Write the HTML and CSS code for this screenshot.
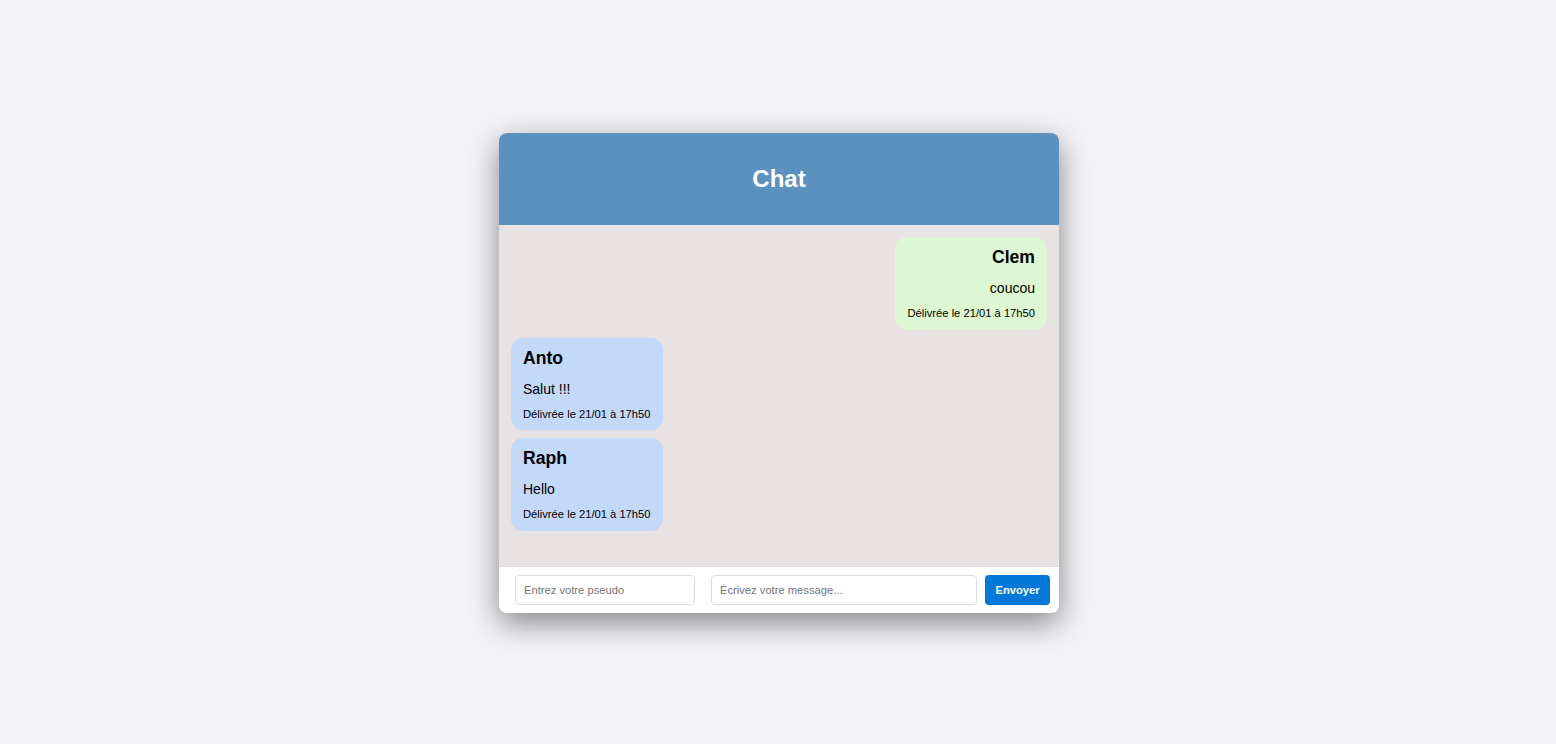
FILE: index.html
```html
<!DOCTYPE html>
<html lang="fr">
<head>
    <meta charset="UTF-8">
    <meta name="viewport" content="width=device-width, initial-scale=1.0">
    <title>Chat</title>
    <link rel="stylesheet" href="styles.css">
</head>
<body>
    <div class="chat-container">
        <div class="chat-header">
            <h1>Chat</h1>
        </div>

        <div class="messages" id="messages">
            <div class="message mine">
                <h3>Clem</h3>
                <p class="text">coucou</p>
                <p class="date">Délivrée le 21/01 à 17h50</p>
            </div>
            <div class="message other">
                <h3>Anto</h3>
                <p class="text">Salut !!!</p>
                <p class="date">Délivrée le 21/01 à 17h50</p>
            </div>
            <div class="message other">
                <h3>Raph</h3>
                <p class="text">Hello</p>
                <p class="date">Délivrée le 21/01 à 17h50</p>
            </div>
        </div>

        <form class="chat-form" onsubmit="return false">
            <input type="text" class="pseudo" placeholder="Entrez votre pseudo">
            <input type="text" class="message-input" placeholder="Écrivez votre message...">
            <button type="submit">Envoyer</button>
        </form>
    </div>
</body>
</html>
```

FILE: styles.css
```css
body {
    font-family: "Liberation Sans", Arial, sans-serif;
    background-color: #f3f3f7;
    margin: 0;
    padding: 2px 0 0 2px;
    box-sizing: border-box;
    height: 100vh;
    display: flex;
    align-items: center;
    justify-content: center;
}
.chat-container {
    width: 560px;
    height: 480px;
    background: white;
    border-radius: 8px;
    overflow: hidden;
    display: flex;
    flex-direction: column;
    box-shadow: 0 10px 30px rgba(0, 0, 0, 0.45);
}
.chat-header {
    background-color: #5a91bf;
    color: white;
    text-align: center;
    height: 92px;
    display: flex;
    align-items: center;
    justify-content: center;
}
.chat-header h1 {
    margin: 0;
    font-size: 24px;
    line-height: 28px;
}
.messages {
    flex: 1;
    background-color: #e8e2e2;
    padding: 12px;
    display: flex;
    flex-direction: column;
    align-items: flex-start;
    gap: 8px;
    overflow-y: auto;
}
.message {
    padding: 10px 12px;
    border-radius: 12px;
    color: black;
}
.message.mine {
    align-self: flex-end;
    text-align: right;
    background-color: #ddf7d2;
}
.message.other {
    background-color: #c3d9fa;
}
.message h3 {
    margin: 0 0 13px;
    font-size: 17.6px;
    line-height: 20px;
}
.message .text {
    margin: 0 0 11px;
    font-size: 14px;
    line-height: 16px;
}
.message .date {
    margin: 0;
    font-size: 11.2px;
    line-height: 12.5px;
}
.chat-form {
    display: flex;
    align-items: center;
    gap: 8px;
    padding: 8px 9px 8px 16px;
    border-top: 1px solid #dddddd;
    background: white;
}
.chat-form input {
    height: 30px;
    box-sizing: border-box;
    border: 1px solid #dddddd;
    border-radius: 4px;
    padding: 0 8px;
    font-family: inherit;
    font-size: 11.2px;
}
.chat-form input::placeholder {
    color: #757575;
}
.chat-form .pseudo {
    width: 180px;
    margin-right: 8px;
}
.chat-form .message-input {
    flex: 1;
}
.chat-form button {
    height: 30px;
    width: 65px;
    border: none;
    border-radius: 4px;
    background-color: #0078d7;
    color: white;
    font-family: inherit;
    font-weight: bold;
    font-size: 11.2px;
    cursor: pointer;
}
```
